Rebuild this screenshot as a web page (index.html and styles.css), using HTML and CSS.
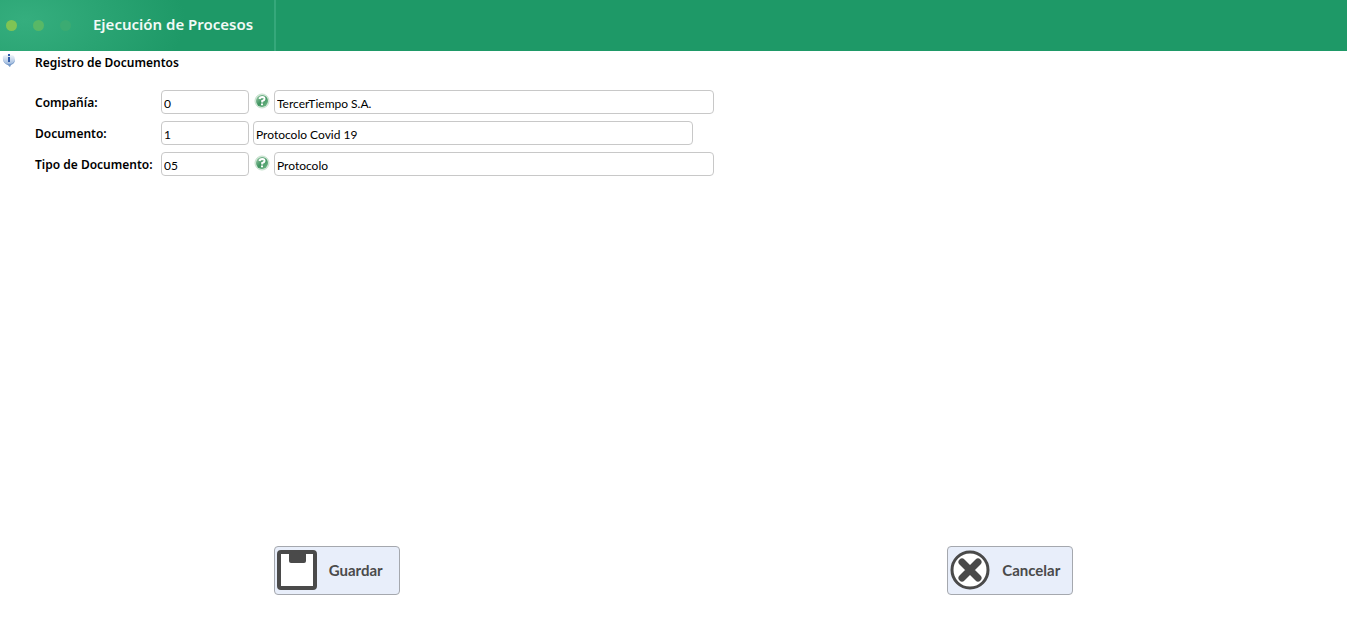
FILE: index.html
```html
<!DOCTYPE html>
<html lang="es">
<head>
    <meta charset="UTF-8">
    <meta name="viewport" content="width=device-width, initial-scale=1.0">
    <title>Registro de Documentos</title>
    <link rel="stylesheet" href="styles.css">
</head>
<body>
    <header class="header">
        <div class="brand">
            <span class="dot"></span>
            <span class="dot dot-mid"></span>
            <span class="dot dot-low"></span>
            <h1 class="title">Ejecución de Procesos</h1>
        </div>
    </header>

    <form class="form">
        <div class="heading">
            <svg class="info" width="14" height="14" viewBox="0 0 14 14" aria-hidden="true">
                <defs>
                    <linearGradient id="ball" x1="0" y1="0" x2="0" y2="1">
                        <stop offset="0" stop-color="#f4f7fb"/>
                        <stop offset="1" stop-color="#86a9d6"/>
                    </linearGradient>
                </defs>
                <path d="M1 2C0 7 3 10 6 11L8 13V11C12 10 14 6 12 2C9 0 4 0 1 2Z" fill="url(#ball)"/>
                <path d="M1 5C2 9 4 10 7 10C10 10 12 9 13 5C13 9 11 10 9 11L8 13L6 11C3 10 1 8 1 5Z" fill="#7699c8"/>
                <path d="M6 0H8V2H6ZM6 3H8V8H6Z" fill="#2f5ba8"/>
            </svg>
            <h2 class="subtitle">Registro de Documentos</h2>
        </div>

        <div class="fields">
            <div class="row">
                <label class="label" for="compania">Compañía:</label>
                <input class="field code" type="text" id="compania" value="0">
                <button class="help" type="button" aria-label="Buscar compañía">
                    <svg width="16" height="16" viewBox="0 0 16 16">
                        <defs>
                            <linearGradient id="green" x1="0" y1="0" x2="1" y2="1">
                                <stop offset="0" stop-color="#a3d0b0"/>
                                <stop offset=".5" stop-color="#3f9460"/>
                                <stop offset="1" stop-color="#7cc08e"/>
                            </linearGradient>
                        </defs>
                        <circle cx="8" cy="8" r="7" fill="#e3f1e7" stroke="#c3dfca"/>
                        <circle cx="8" cy="8" r="6" fill="url(#green)"/>
                        <path d="M5.500 6Q6 4 8.300 4Q10.700 4.200 10.500 6Q10.300 7.300 8.200 8V9.500" fill="none" stroke="#fff" stroke-width="2"/>
                        <path d="M7 10.500H9V12.300H7Z" fill="#fff"/>
                    </svg>
                </button>
                <input class="field name" type="text" aria-label="Nombre de compañía" value="TercerTiempo S.A.">
            </div>
            <div class="row">
                <label class="label" for="documento">Documento:</label>
                <input class="field code" type="text" id="documento" value="1">
                <input class="field name" type="text" aria-label="Nombre de documento" value="Protocolo Covid 19">
            </div>
            <div class="row">
                <label class="label" for="tipo">Tipo de Documento:</label>
                <input class="field code" type="text" id="tipo" value="05">
                <button class="help" type="button" aria-label="Buscar tipo de documento">
                    <svg width="16" height="16" viewBox="0 0 16 16">
                        <circle cx="8" cy="8" r="7" fill="#e3f1e7" stroke="#c3dfca"/>
                        <circle cx="8" cy="8" r="6" fill="url(#green)"/>
                        <path d="M5.500 6Q6 4 8.300 4Q10.700 4.200 10.500 6Q10.300 7.300 8.200 8V9.500" fill="none" stroke="#fff" stroke-width="2"/>
                        <path d="M7 10.500H9V12.300H7Z" fill="#fff"/>
                    </svg>
                </button>
                <input class="field name" type="text" aria-label="Nombre de tipo de documento" value="Protocolo">
            </div>
        </div>

        <div class="actions">
            <button class="action" type="button">
                <svg width="40" height="40" viewBox="0 0 40 40" aria-hidden="true">
                    <rect x="2" y="2" width="36" height="36" rx="2" fill="#fff" stroke="#4a4a4a" stroke-width="4"/>
                    <path d="M12 2H29V11Q29 13 27 13H14Q12 13 12 11Z" fill="#4a4a4a"/>
                </svg>
                <span class="caption">Guardar</span>
            </button>
            <button class="action" type="button">
                <svg width="40" height="40" viewBox="0 0 40 40" aria-hidden="true">
                    <circle cx="20" cy="20" r="18" fill="#fff" stroke="#4a4a4a" stroke-width="3"/>
                    <path d="M12 12L28 28M28 12L12 28" fill="none" stroke="#4a4a4a" stroke-width="7" stroke-linecap="round"/>
                </svg>
                <span class="caption">Cancelar</span>
            </button>
        </div>
    </form>
</body>
</html>
```
FILE: styles.css
```css
*{
    box-sizing: border-box;
}
body{
    margin: 0;
    min-height: 100vh;
    display: flex;
    flex-direction: column;
    background: #fff;
    color: #000;
    font-family: "Noto Sans", "Open Sans", sans-serif;
    font-size: 12px;
}
.header{
    height: 51px;
    background: #1e9967;
}
.brand{
    display: flex;
    align-items: center;
    gap: 16px;
    width: 276px;
    height: 51px;
    padding-left: 6px;
    border-right: 2px solid #35a87b;
    background: radial-gradient(ellipse 160px 90px at 25px 20px, #35ae7e, #1e9967);
}
.dot{
    width: 11px;
    height: 11px;
    border-radius: 50%;
    background: #7fc454;
}
.dot-mid{
    background: #58b866;
}
.dot-low{
    background: #3bab72;
}
.title{
    margin: 0 0 0 6px;
    padding-bottom: 4px;
    color: #f2faf6;
    font-size: 15px;
    font-weight: 600;
    line-height: 20px;
    white-space: nowrap;
}
.form{
    flex: 1;
    display: flex;
    flex-direction: column;
}
.heading{
    display: flex;
    align-items: flex-start;
    padding: 3px 2px 0;
}
.info{
    margin-right: 19px;
}
.subtitle{
    margin: 0;
    font-size: 12px;
    font-weight: 600;
    line-height: 18px;
}
.fields{
    display: flex;
    flex-direction: column;
    gap: 7px;
    padding: 18px 35px;
}
.row{
    display: flex;
    align-items: center;
    gap: 4px;
}
.label{
    width: 122px;
    font-weight: 600;
    white-space: nowrap;
}
.field{
    height: 24px;
    padding: 2px 2px 0;
    border: 1px solid #c8c8c8;
    border-radius: 4px;
    background: #fff;
    color: #000;
    font-family: Lato, "Open Sans", sans-serif;
    font-size: 12px;
}
.code{
    width: 88px;
}
.name{
    width: 440px;
}
.help{
    display: flex;
    justify-content: flex-end;
    width: 17px;
    height: 18px;
    padding: 0;
    border: 0;
    background: none;
    cursor: pointer;
}
.actions{
    display: grid;
    grid-template-columns: 1fr 1fr;
    justify-items: center;
    margin-top: auto;
    padding-bottom: 31px;
}
.action{
    display: flex;
    align-items: center;
    gap: 12px;
    width: 126px;
    height: 49px;
    padding: 0 2px 1px;
    border: 1px solid #a5a8ae;
    border-radius: 4px;
    background: #e8eefa;
    color: #4a4a4a;
    cursor: pointer;
}
.caption{
    font-family: Lato, "Open Sans", sans-serif;
    font-size: 15px;
    font-weight: 700;
}
```
